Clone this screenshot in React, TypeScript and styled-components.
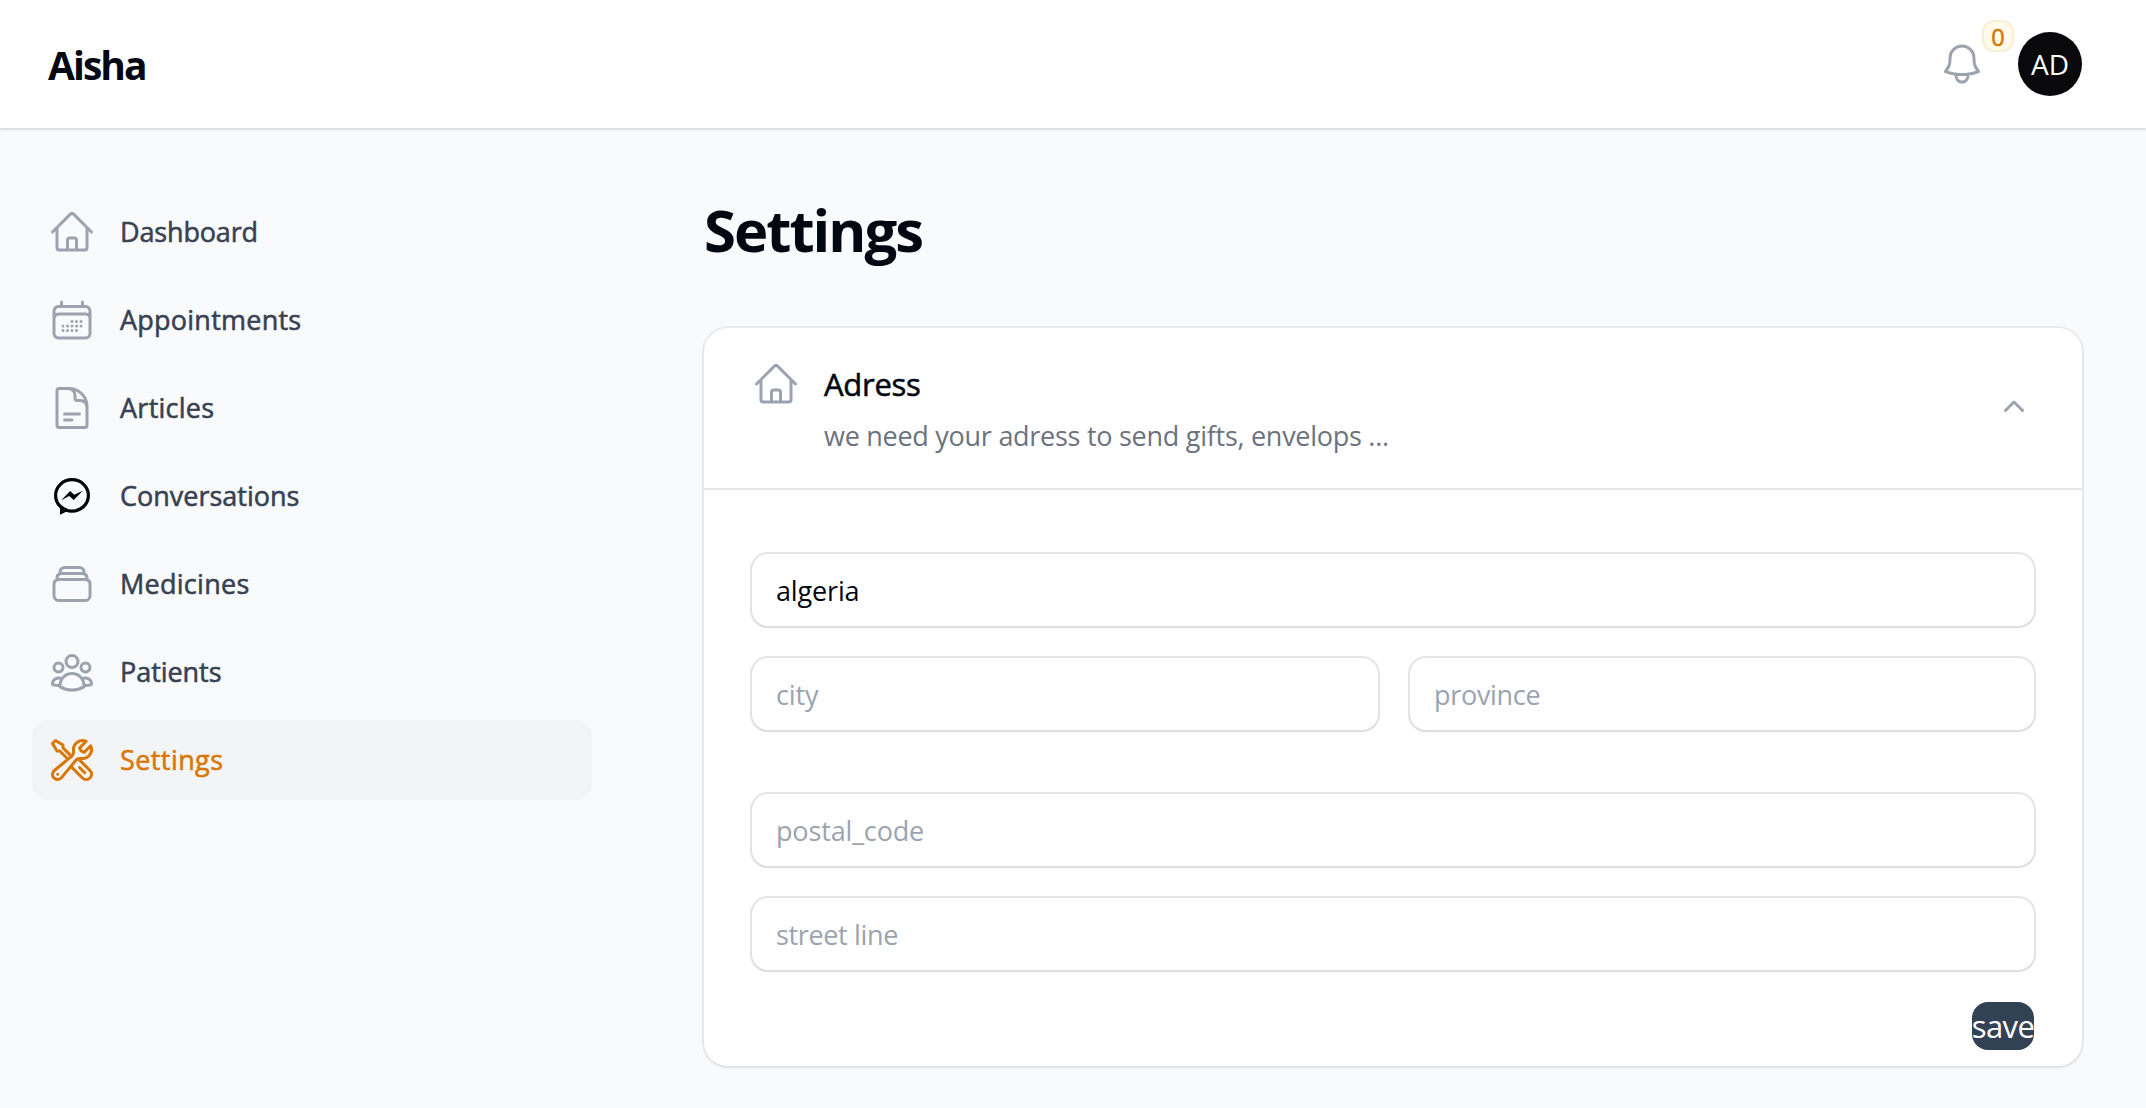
import React from "react";
import styled, { createGlobalStyle, css } from "styled-components";
import {
  HiOutlineBell,
  HiOutlineCalendarDays,
  HiOutlineDocumentText,
  HiOutlineHome,
  HiOutlineRectangleStack,
  HiOutlineUserGroup,
  HiOutlineWrenchScrewdriver,
  HiMiniChevronUp,
} from "react-icons/hi2";

const GlobalStyle = createGlobalStyle`
  *, *::before, *::after { box-sizing: border-box; }
  body {
    margin: 0;
    background: #f9fafc;
    color: #030712;
    font-family: "Open Sans", "Noto Sans", sans-serif;
  }
`;

/* The installed family has no medium cut, so a thin stroke thickens the regular one. */
const mediumWeight = css`
  font-weight: 500;
  -webkit-text-stroke: 0.55px currentColor;
`;

const Page = styled.div`
  min-height: 1108px;
  display: flex;
  flex-direction: column;
`;

const TopBar = styled.header`
  height: 128px;
  padding: 0 64px 0 48px;
  display: flex;
  align-items: center;
  justify-content: space-between;
  background: #fff;
  box-shadow: 0 0 0 2px rgba(3, 7, 18, 0.07), 0 2px 4px rgba(0, 0, 0, 0.05);
`;

const Brand = styled.div`
  padding-top: 2px;
  font-size: 39px;
  line-height: 56px;
  font-weight: 700;
  letter-spacing: -1.95px;
`;

const Actions = styled.div`
  display: flex;
  align-items: center;
  gap: 32px;
`;

const BellButton = styled.button`
  position: relative;
  display: flex;
  padding: 0;
  border: 0;
  background: none;
  color: #9ca3af;
`;

const Badge = styled.span`
  position: absolute;
  left: 44px;
  top: -20px;
  width: 32px;
  height: 32px;
  padding-top: 1px;
  display: flex;
  align-items: center;
  justify-content: center;
  border-radius: 12px;
  background: #fffbeb;
  box-shadow: inset 0 0 0 2px rgba(217, 119, 6, 0.1);
  color: #d97706;
  font-family: "Open Sans", "Noto Sans", sans-serif;
  font-size: 23.5px;
  line-height: 32px;
  ${mediumWeight}
`;

const Avatar = styled.div`
  width: 64px;
  height: 64px;
  display: flex;
  align-items: center;
  justify-content: center;
  border-radius: 50%;
  background: #09090b;
  color: #fff;
  font-size: 28px;
  line-height: 62px;
`;

const Body = styled.div`
  display: flex;
  flex: 1;
  padding: 64px 64px 40px 32px;
  gap: 112px;
`;

const Sidebar = styled.nav`
  width: 560px;
  display: flex;
  flex-direction: column;
  gap: 8px;
`;

const NavItem = styled.a<{ $active?: boolean }>`
  height: 80px;
  padding: 0 16px;
  display: flex;
  align-items: center;
  gap: 24px;
  border-radius: 16px;
  color: #374151;
  ${(p) => p.$active && css`background: #f3f4f6; color: #d97706;`}
`;

const NavIcon = styled.span<{ $color: string }>`
  display: flex;
  color: ${(p) => p.$color};
`;

const NavLabel = styled.span<{ $spacing: number }>`
  font-size: 27px;
  line-height: 48px;
  ${mediumWeight}
  letter-spacing: ${(p) => p.$spacing}px;
`;

const Main = styled.main`
  flex: 1;
  display: flex;
  flex-direction: column;
  gap: 64px;
`;

const Title = styled.h1`
  height: 72px;
  margin: 0;
  padding-top: 2px;
  font-size: 58px;
  line-height: 72px;
  font-weight: 700;
  letter-spacing: -2px;
`;

const Card = styled.section`
  border-radius: 24px;
  background: #fff;
  box-shadow: 0 0 0 2px rgba(3, 7, 18, 0.06), 0 2px 4px rgba(0, 0, 0, 0.05);
`;

const CardHeader = styled.div`
  height: 160px;
  padding: 32px 48px;
  display: flex;
  gap: 24px;
`;

const CardIcon = styled.span`
  display: flex;
  color: #9ca3af;
`;

const CardHeading = styled.div`
  flex: 1;
  display: flex;
  flex-direction: column;
  gap: 8px;
`;

const CardTitle = styled.h3`
  margin: 0;
  font-size: 31px;
  line-height: 48px;
  ${mediumWeight}
  letter-spacing: -0.28px;
`;

const CardText = styled.p`
  margin: 0;
  color: #6b7280;
  font-size: 27px;
  line-height: 40px;
  letter-spacing: -0.27px;
`;

const Toggle = styled.button`
  align-self: flex-start;
  display: flex;
  margin: 28px 0 0;
  padding: 0;
  border: 0;
  background: none;
  color: #9ca3af;
`;

const Form = styled.form`
  padding: 64px 48px 16px;
  display: flex;
  flex-direction: column;
  gap: 32px;
  border-top: 2px solid #e5e7eb;
`;

const Group = styled.div`
  display: grid;
  grid-template-columns: 626px 1fr;
  gap: 32px;
  margin-bottom: 32px;
`;

const Field = styled.input<{ $wide?: boolean; $spacing?: number }>`
  ${(p) => p.$wide && "grid-column: 1 / -1;"}
  width: 100%;
  height: 72px;
  padding: 0 24px;
  border: 0;
  border-radius: 16px;
  outline: none;
  background: #fff;
  color: #030712;
  box-shadow: 0 0 0 2px rgba(3, 7, 18, 0.1), 0 2px 4px rgba(0, 0, 0, 0.05);
  font: 400 27px/48px "Open Sans", "Noto Sans", sans-serif;
  letter-spacing: ${(p) => p.$spacing ?? -0.15}px;
  &::placeholder { color: #9ca3af; opacity: 1; }
`;

const SaveButton = styled.button`
  align-self: flex-end;
  width: 62px;
  height: 48px;
  padding: 0;
  display: flex;
  justify-content: center;
  border: 0;
  border-radius: 16px;
  background: #334155;
  color: #fff;
  font: 400 31px/48px "Open Sans", "Noto Sans", sans-serif;
  letter-spacing: -0.6px;
`;

function MessengerIcon({ size }: { size: number }) {
  return (
    <svg width={size} height={size} viewBox="0 0 48 48" fill="currentColor">
      <ellipse cx="24" cy="23.4" rx="16.4" ry="15.7" fill="none" stroke="currentColor" strokeWidth="3.2" />
      <path d="M12 33V42.8L18.6 39.6L17 36.4L14.6 34Z" />
      <path d="M13.2 28.2L22.2 19L26.2 22.8L34.8 18.7L25.7 28L21.2 23.9Z" />
    </svg>
  );
}

const GRAY = "#9ca3af";

const nav = [
  { label: "Dashboard", Icon: HiOutlineHome, color: GRAY, spacing: -0.16 },
  { label: "Appointments", Icon: HiOutlineCalendarDays, color: GRAY, spacing: 0.24 },
  { label: "Articles", Icon: HiOutlineDocumentText, color: GRAY, spacing: 0.26 },
  { label: "Conversations", Icon: MessengerIcon, color: "#000", spacing: 0 },
  { label: "Medicines", Icon: HiOutlineRectangleStack, color: GRAY, spacing: 0.27 },
  { label: "Patients", Icon: HiOutlineUserGroup, color: GRAY, spacing: -0.05 },
  { label: "Settings", Icon: HiOutlineWrenchScrewdriver, color: "#d97706", spacing: 0.42, active: true },
];

export default function App() {
  return (
    <Page>
      <GlobalStyle />
      <TopBar>
        <Brand>Aisha</Brand>
        <Actions>
          <BellButton aria-label="Notifications" type="button">
            <HiOutlineBell size={48} />
            <Badge>0</Badge>
          </BellButton>
          <Avatar>AD</Avatar>
        </Actions>
      </TopBar>
      <Body>
        <Sidebar>
          {nav.map(({ label, Icon, color, spacing, active }) => (
            <NavItem key={label} $active={active}>
              <NavIcon $color={color}>
                <Icon size={48} />
              </NavIcon>
              <NavLabel $spacing={spacing}>{label}</NavLabel>
            </NavItem>
          ))}
        </Sidebar>
        <Main>
          <Title>Settings</Title>
          <Card>
            <CardHeader>
              <CardIcon>
                <HiOutlineHome size={48} />
              </CardIcon>
              <CardHeading>
                <CardTitle>Adress</CardTitle>
                <CardText>we need your adress to send gifts, envelops ...</CardText>
              </CardHeading>
              <Toggle aria-label="Collapse" type="button">
                <HiMiniChevronUp size={40} />
              </Toggle>
            </CardHeader>
            <Form>
              <Group>
                <Field $wide defaultValue="algeria" />
                <Field placeholder="city" />
                <Field placeholder="province" $spacing={-0.3} />
              </Group>
              <Field placeholder="postal_code" />
              <Field placeholder="street line" $spacing={-0.35} />
              <SaveButton type="button">save</SaveButton>
            </Form>
          </Card>
        </Main>
      </Body>
    </Page>
  );
}
